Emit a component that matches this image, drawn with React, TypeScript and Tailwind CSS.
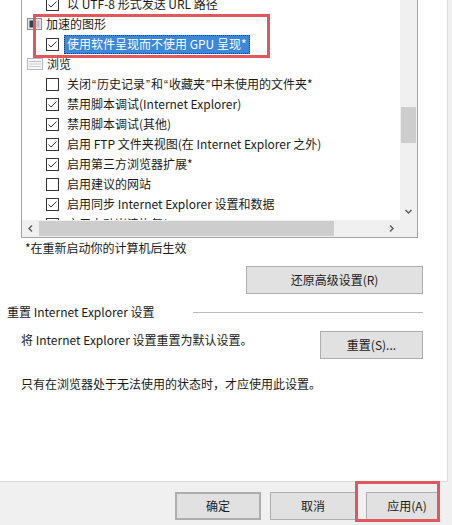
import React from "react";

type Row =
  | { kind: "item"; checked: boolean; text: string; selected?: boolean }
  | { kind: "cat"; icon: "gfx" | "list"; text: string };

const rows: Row[] = [
  { kind: "item", checked: true, text: "以 UTF-8 形式发送 URL 路径" },
  { kind: "cat", icon: "gfx", text: "加速的图形" },
  { kind: "item", checked: true, text: "使用软件呈现而不使用 GPU 呈现*", selected: true },
  { kind: "cat", icon: "list", text: "浏览" },
  { kind: "item", checked: false, text: "关闭“历史记录”和“收藏夹”中未使用的文件夹*" },
  { kind: "item", checked: true, text: "禁用脚本调试(Internet Explorer)" },
  { kind: "item", checked: true, text: "禁用脚本调试(其他)" },
  { kind: "item", checked: true, text: "启用 FTP 文件夹视图(在 Internet Explorer 之外)" },
  { kind: "item", checked: true, text: "启用第三方浏览器扩展*" },
  { kind: "item", checked: false, text: "启用建议的网站" },
  { kind: "item", checked: true, text: "启用同步 Internet Explorer 设置和数据" },
  { kind: "item", checked: false, text: "启用自动崩溃恢复*" },
];

// narrow curly quotes, like the Windows UI font shows them
const withQuotes = (t: string) =>
  t.split(/([“”])/).map((p, i) =>
    p === "“" || p === "”" ? (
      <span key={i} className="font-['Liberation_Sans',sans-serif] mx-[1px]">
        {p}
      </span>
    ) : (
      <React.Fragment key={i}>{p}</React.Fragment>
    )
  );

const CheckBox = ({ checked }: { checked: boolean }) => (
  <span className="w-[13px] h-[13px] border border-[#333333] bg-white flex items-center justify-center shrink-0">
    {checked && (
      <svg width="11" height="11" viewBox="0 0 11 11">
        <path d="M1.5 5.5 L4 8 L9.5 2.5" fill="none" stroke="#333333" strokeWidth="1" />
      </svg>
    )}
  </span>
);

const CatIcon = ({ icon }: { icon: "gfx" | "list" }) =>
  icon === "gfx" ? (
    <svg width="15" height="12" viewBox="0 0 15 12" className="shrink-0">
      <rect x="0.5" y="0.5" width="14" height="11" fill="#e4e7ea" stroke="#8a8f96" />
      <rect x="2.5" y="2.5" width="6" height="7" fill="#34414f" />
      <rect x="9.5" y="2.5" width="3" height="7" fill="#b9c2cc" />
    </svg>
  ) : (
    <svg width="16" height="12" viewBox="0 0 16 12" className="shrink-0">
      <rect x="0.5" y="0.5" width="15" height="11" fill="#f6f6f6" stroke="#b4b8bd" />
      <line x1="2" y1="3.5" x2="14" y2="3.5" stroke="#b8c2cc" />
      <line x1="2" y1="6" x2="14" y2="6" stroke="#c8d0d8" />
      <line x1="2" y1="8.5" x2="14" y2="8.5" stroke="#c8d0d8" />
    </svg>
  );

const Chevron = ({ dir }: { dir: "left" | "right" | "down" }) => {
  const d =
    dir === "left" ? "M6 1.5 L3 4.5 L6 7.5" : dir === "right" ? "M3 1.5 L6 4.5 L3 7.5" : "M1.5 3 L4.5 6 L7.5 3";
  return (
    <svg width="9" height="9" viewBox="0 0 9 9">
      <path d={d} fill="none" stroke="#606060" strokeWidth="1.5" />
    </svg>
  );
};

const Btn = ({ label, w, extra = "" }: { label: string; w: string; extra?: string }) => (
  <div className={`${w} h-[28px] bg-[#e1e1e1] border border-[#adadad] flex items-center justify-center text-[12px] text-[#1a1a1a] shrink-0 ${extra}`}>
    {label}
  </div>
);

export default function App() {
  return (
    <div className="w-[452px] h-[525px] bg-[#f0f0f0] flex flex-col overflow-hidden relative font-['Noto_Sans_CJK_SC',sans-serif] text-[12px] text-[#1a1a1a]">
      <div className="w-[448px] h-[482px] bg-white border-r border-b border-[#d9d9d9] flex flex-col shrink-0">
        {/* advanced settings list */}
        <div className="ml-[21px] w-[397px] h-[238px] border-x border-b border-[#a3a3a3] flex flex-col shrink-0">
          <div className="flex h-[220px]">
            <div className="w-[378px] overflow-hidden">
              <div className="-mt-[6px] flex flex-col">
                {rows.map((r, i) =>
                  r.kind === "cat" ? (
                    <div key={i} className="h-[20px] flex items-center pl-[5px] gap-[4px] whitespace-nowrap">
                      <CatIcon icon={r.icon} />
                      <span className="leading-[20px]">{r.text}</span>
                    </div>
                  ) : (
                    <div key={i} className="h-[20px] flex items-center pl-[24px] whitespace-nowrap">
                      <CheckBox checked={r.checked} />
                      {r.selected ? (
                        <span className="ml-[5px] h-[19px] px-[2px] flex items-center bg-[#3b87d8] text-white border border-dotted border-[#1c3f66]">
                          {r.text}
                        </span>
                      ) : (
                        <span className="ml-[8px] leading-[20px]">{withQuotes(r.text)}</span>
                      )}
                    </div>
                  )
                )}
              </div>
            </div>
            <div className="w-[17px] bg-[#f0f0f0] flex flex-col items-center">
              <div className="h-[107px]" />
              <div className="w-[15px] h-[36px] bg-[#cdcdcd]" />
              <div className="flex-1" />
              <div className="h-[17px] flex items-center justify-center">
                <Chevron dir="down" />
              </div>
            </div>
          </div>
          <div className="h-[17px] flex bg-[#f0f0f0]">
            <div className="w-[17px] flex items-center justify-center">
              <Chevron dir="left" />
            </div>
            <div className="w-[295px] my-[1px] bg-[#cdcdcd]" />
            <div className="flex-1" />
            <div className="w-[17px] flex items-center justify-center">
              <Chevron dir="right" />
            </div>
            <div className="w-[17px] bg-[#f0f0f0]" />
          </div>
        </div>

        <div className="mt-[2px] ml-[25px] h-[16px] leading-[16px]">*在重新启动你的计算机后生效</div>

        <Btn label="还原高级设置(R)" w="w-[177px]" extra="mt-[10px] ml-[246px] h-[27px]" />

        <div className="mt-[10px] h-[16px] flex items-center">
          <span className="ml-[7px] leading-[16px]">重置 Internet Explorer 设置</span>
          <div className="ml-auto mr-[24px] w-[230px] h-px bg-[#bcbcbc]" />
        </div>

        <div className="mt-[11px] flex items-start">
          <span className="ml-[21px] mt-[1px] leading-[16px]">将 Internet Explorer 设置重置为默认设置。</span>
          <Btn label="重置(S)..." w="w-[103px]" extra="ml-auto mr-[24px] h-[27px]" />
        </div>

        <div className="mt-[17px] ml-[21px] leading-[16px]">只有在浏览器处于无法使用的状态时，才应使用此设置。</div>
      </div>

      {/* dialog buttons */}
      <div className="flex mt-[10px] gap-[9px] pl-[175px]">
        <Btn label="确定" w="w-[86px]" extra="border-2 border-[#3d7dc9]" />
        <Btn label="取消" w="w-[86px]" />
        <Btn label="应用(A)" w="w-[74px]" extra="pl-[8px] ml-[1px]" />
      </div>

      {/* annotation boxes */}
      <div className="absolute left-[33px] top-[14px] w-[237px] h-[44px] border-[3px] border-[#e0585d]" />
      <div className="absolute left-[355px] top-[481px] w-[85px] h-[41px] border-[3px] border-[#e0585d]" />
    </div>
  );
}
